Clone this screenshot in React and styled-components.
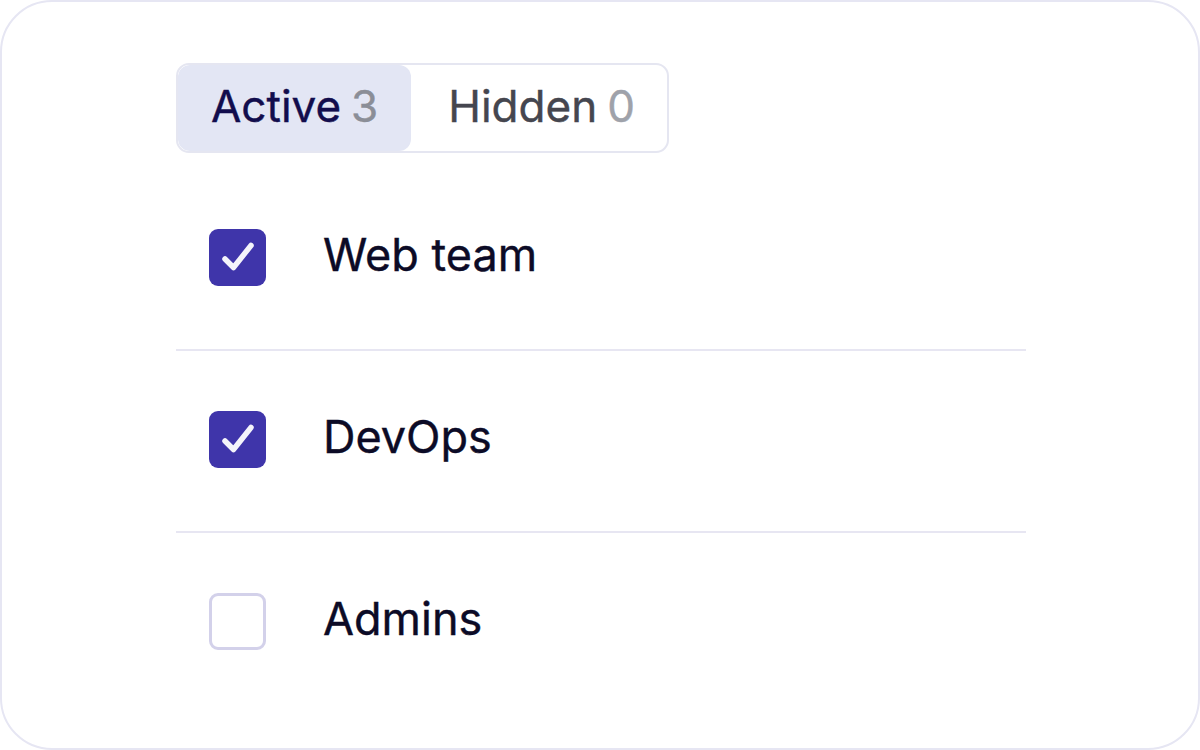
import React, { useState } from 'react';
import styled, { createGlobalStyle } from 'styled-components';

const GlobalStyle = createGlobalStyle`
  html, body {
    margin: 0;
    padding: 0;
    background: #ffffff;
  }
  body {
    font-family: Inter, "Noto Sans", sans-serif;
  }
`;

const Card = styled.div`
  box-sizing: border-box;
  width: 1200px;
  height: 750px;
  border: 2px solid #e6e6f3;
  border-radius: 52px;
  background: #fff;
  padding: 61px 0 0 174px;
`;

const Content = styled.div`
  width: 850px;
`;

const Tabs = styled.div`
  display: inline-flex;
  box-sizing: border-box;
  height: 90px;
  border: 2px solid #e5e6f1;
  border-radius: 13px;
  overflow: hidden;
`;

const Tab = styled.button`
  display: flex;
  align-items: center;
  gap: 10px;
  height: 100%;
  border: none;
  margin: 0;
  padding: 0 ${({ $active }) => ($active ? '33px' : '32px')} 5px ${({ $active }) => ($active ? '33px' : '37px')};
  border-radius: 12px;
  background: ${({ $active }) => ($active ? '#e3e6f4' : 'transparent')};
  color: ${({ $active }) => ($active ? '#120d4d' : '#45464f')};
  font-family: Inter, sans-serif;
  font-size: 44px;
  font-weight: 400;
  -webkit-text-stroke: 0.4px currentColor;
  cursor: pointer;
`;

const Count = styled.span`
  color: ${({ $active }) => ($active ? '#8b8e97' : '#9fa2aa')};
`;

const List = styled.ul`
  list-style: none;
  margin: 16px 0 0;
  padding: 0;
`;

const Row = styled.li`
  display: flex;
  align-items: center;
  gap: 57px;
  padding: 60px 0 63px 33px;
  border-bottom: ${({ $last }) => ($last ? 'none' : '2px solid #e7e6f2')};
`;

const Box = styled.span`
  box-sizing: border-box;
  flex: none;
  display: flex;
  align-items: center;
  justify-content: center;
  width: 57px;
  height: 57px;
  border-radius: 9px;
  background: ${({ $checked }) => ($checked ? '#3f35aa' : '#fff')};
  border: ${({ $checked }) => ($checked ? 'none' : '3px solid #d3d1ea')};
  cursor: pointer;
`;

const Label = styled.span`
  font-size: 45px;
  font-weight: 400;
  -webkit-text-stroke: 0.4px currentColor;
  line-height: 1;
  padding-bottom: 7px;
  color: #0c0b26;
`;

const Check = () => (
  <svg width="57" height="57" viewBox="0 0 57 57" fill="none">
    <path
      d="M16 30l8.5 8.5L42 16.5"
      stroke="#f4f4fb"
      strokeWidth="5.5"
      strokeLinecap="round"
      strokeLinejoin="round"
    />
  </svg>
);

const groups = [
  { name: 'Web team', checked: true },
  { name: 'DevOps', checked: true },
  { name: 'Admins', checked: false },
];

export default function App() {
  const [tab, setTab] = useState('active');
  const [items, setItems] = useState(groups);

  const toggle = (i) =>
    setItems((prev) => prev.map((g, j) => (j === i ? { ...g, checked: !g.checked } : g)));

  return (
    <>
      <GlobalStyle />
      <Card>
        <Content>
          <Tabs>
            <Tab $active={tab === 'active'} onClick={() => setTab('active')}>
              Active <Count $active>3</Count>
            </Tab>
            <Tab $active={tab === 'hidden'} onClick={() => setTab('hidden')}>
              Hidden <Count>0</Count>
            </Tab>
          </Tabs>
          <List>
            {items.map((g, i) => (
              <Row key={g.name} $last={i === items.length - 1}>
                <Box $checked={g.checked} onClick={() => toggle(i)}>
                  {g.checked && <Check />}
                </Box>
                <Label>{g.name}</Label>
              </Row>
            ))}
          </List>
        </Content>
      </Card>
    </>
  );
}
